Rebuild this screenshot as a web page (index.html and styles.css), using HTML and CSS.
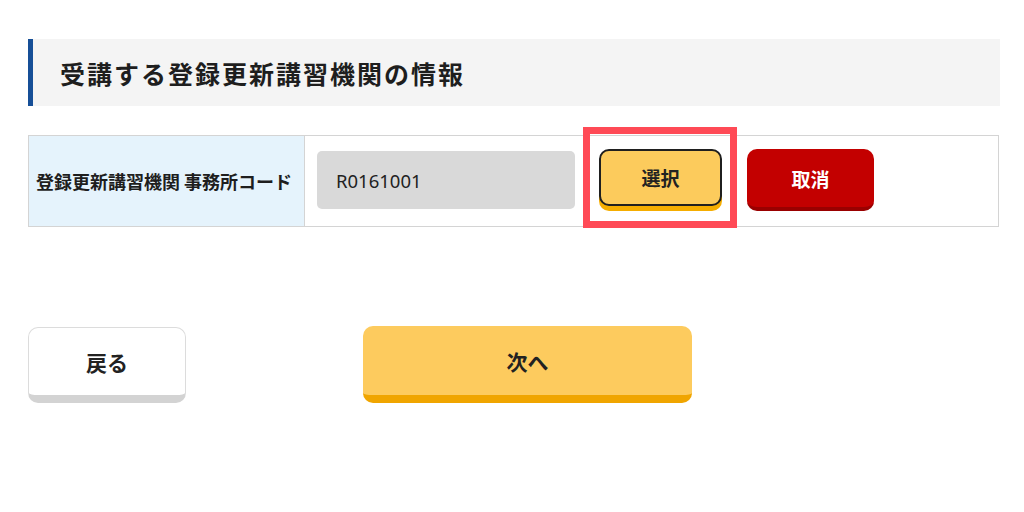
FILE: index.html
```html
<!DOCTYPE html>
<html lang="ja">
<head>
<meta charset="utf-8">
<link rel="stylesheet" href="styles.css">
</head>
<body>
<div class="page">
  <h2 class="section-title">受講する登録更新講習機関の情報</h2>
  <div class="info-table">
    <div class="label-cell">登録更新講習機関 事務所コード</div>
    <div class="value-cell">
      <div class="code-input">R0161001</div>
      <div class="highlight-wrap">
        <button class="btn-select">選択</button>
        <div class="highlight"></div>
      </div>
      <button class="btn-cancel">取消</button>
    </div>
  </div>
  <div class="actions">
    <button class="btn-back">戻る</button>
    <button class="btn-next">次へ</button>
  </div>
</div>
</body>
</html>
```

FILE: styles.css
```css
* { box-sizing: border-box; }
html, body { min-height: 100%; }
body {
  margin: 0;
  background: #ffffff;
  font-family: "Noto Sans CJK JP", "Noto Sans", sans-serif;
  color: #1a1a1a;
}
.page {
  padding: 39px 24px 100px 28px;
}
.section-title {
  margin: 0;
  height: 67px;
  background: #f4f4f4;
  border-left: 5px solid #164f97;
  display: flex;
  align-items: center;
  padding-left: 27px;
  font-size: 25px;
  letter-spacing: 2px;
  font-weight: 700;
  color: #1e1e1e;
}
.info-table {
  margin-top: 29px;
  width: 971px;
  height: 92px;
  border: 1px solid #d4d4d4;
  display: flex;
}
.label-cell {
  width: 276px;
  background: #e5f3fc;
  border-right: 1px solid #d4d4d4;
  display: flex;
  align-items: center;
  padding-left: 7px;
  font-size: 18px;
  font-weight: 700;
  white-space: nowrap;
  color: #1e1e1e;
}
.value-cell {
  flex: 1;
  display: flex;
  align-items: flex-start;
  padding: 15px 0 0 12px;
}
.code-input {
  width: 258px;
  height: 58px;
  background: #d9d9d9;
  border-radius: 5px;
  display: flex;
  align-items: center;
  padding-left: 19px;
  font-size: 18.5px;
  color: #222;
  font-family: "Noto Sans", sans-serif;
}
.highlight-wrap {
  position: relative;
  margin-left: 24px;
  margin-top: -2px;
}
.btn-select {
  display: block;
  width: 123px;
  height: 57px;
  background: #fccb5c;
  border: 2px solid #1f1f1f;
  border-radius: 10px;
  box-shadow: 0 5px 0 #f5ad00;
  font-family: inherit;
  font-size: 19px;
  font-weight: 700;
  color: #222;
  padding: 0;
}
.highlight {
  position: absolute;
  left: -16px;
  top: -22px;
  right: -15px;
  bottom: -22px;
  border: 7px solid #ff4a56;
  pointer-events: none;
}
.btn-cancel {
  margin-left: 25px;
  margin-top: -2px;
  width: 127px;
  height: 62px;
  background: #c30000;
  border: none;
  border-bottom: 4px solid #9a0000;
  border-radius: 10px;
  font-family: inherit;
  font-size: 19px;
  font-weight: 700;
  color: #ffffff;
  padding: 0;
}
.actions {
  margin-top: 100px;
  display: flex;
  align-items: flex-start;
}
.btn-back {
  width: 158px;
  height: 76px;
  background: #ffffff;
  border: 1px solid #dcdcdc;
  border-bottom: 8px solid #d3d3d3;
  border-radius: 10px;
  font-family: inherit;
  font-size: 21px;
  font-weight: 700;
  color: #222;
  padding: 0;
}
.btn-next {
  margin-left: 177px;
  margin-top: -1px;
  width: 329px;
  height: 77px;
  background: #fdcb5e;
  border: none;
  border-bottom: 8px solid #f0a500;
  border-radius: 10px;
  font-family: inherit;
  font-size: 21px;
  font-weight: 700;
  color: #222;
  padding: 0;
}
```
